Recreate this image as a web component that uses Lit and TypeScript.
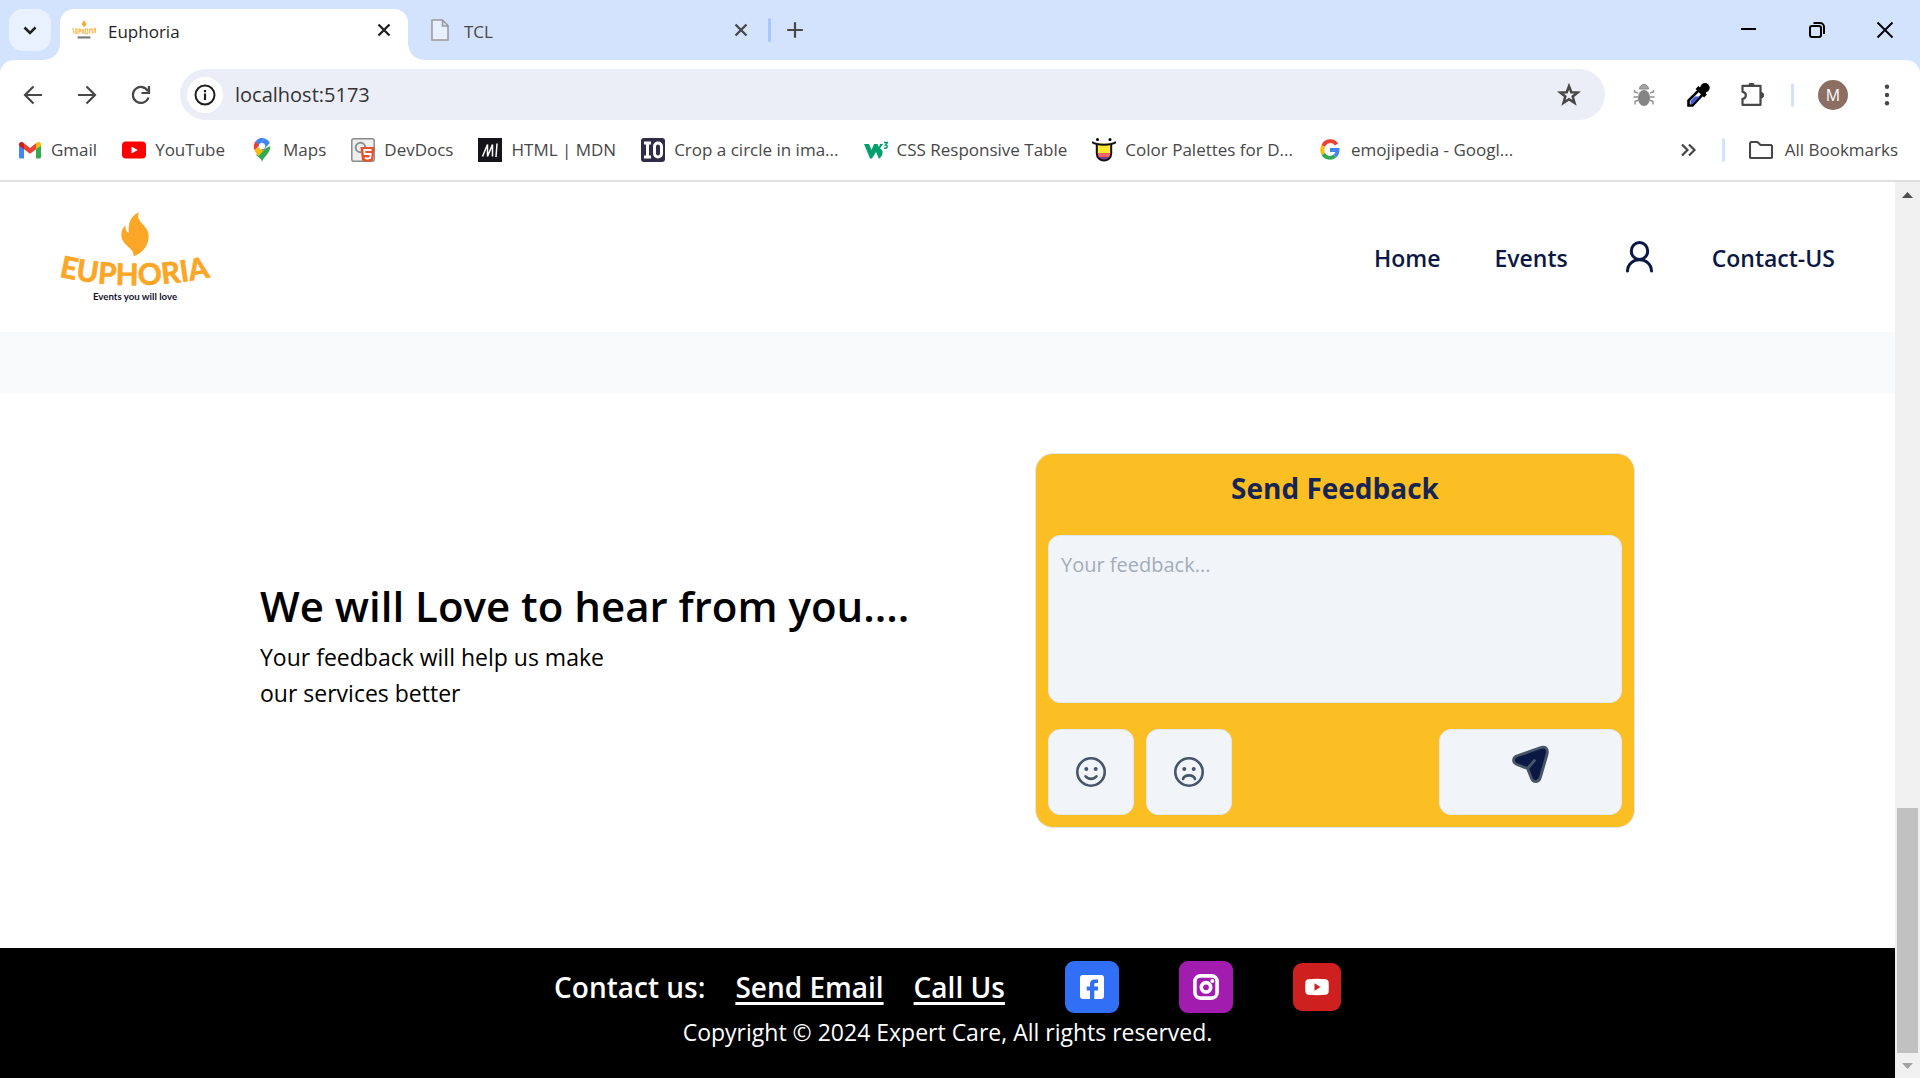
import { LitElement, html, css, svg } from "lit";
import { customElement } from "lit/decorators.js";

const closeIcon = svg`<path d="M6.500 6.500L17.500 17.500M17.500 6.500L6.500 17.500" fill="none" stroke="currentColor" stroke-width="2.300"/>`;

const flame = svg`<path fill="#fba626" d="M417 96C390 108 385 128 386 158C378 154 375 147 377 135C367 143 363 154 364 168C367 196 401 200 401 228C430 218 447 193 446 165C445 133 403 123 417 96Z"/>`;

const pics: Record<string, unknown> = {
  gmail: svg`<path fill="#4285f4" d="M1 6.500v12.500a1.500 1.500 0 0 0 1.500 1.500H6V10z"/><path fill="#34a853" d="M18 20.500h3.500A1.500 1.500 0 0 0 23 19V6.500L18 10z"/><path fill="#c5221f" d="M1 6.500C1 4 3.500 3.500 5 4.500l1 .8v6L1 7.800z"/><path fill="#fbbc04" d="M23 6.500c0-2.500-2.500-3-4-2l-1 .8v6l5-3.500z"/><path fill="#ea4335" d="M6 5.300l6 4.600 6-4.600v6l-6 4.500-6-4.500z"/>`,
  youtube: svg`<rect y="3.500" width="24" height="17" rx="4" fill="#f00"/><path fill="#fff" d="M9.500 8.500v7l6.300-3.500z"/>`,
  maps: svg`<path fill="#34a853" d="M12 24c1-5 8.500-8.500 8.300-16L12 12 6 17c3.500 3 5.500 4 6 7z"/><path fill="#fbbc04" d="M4.500 12c.8 2.500 2.500 4.300 3.800 6.300L16 10l-5-2z"/><path fill="#ea4335" d="M5.600 3.200C3.600 5.600 3.400 9 4.600 12.300L11 6z"/><path fill="#4285f4" d="M5.600 3.200A8.300 8.300 0 0 1 14.800.5L9 7.200z"/><path fill="#4285f4" d="M14.500.4a8 8 0 0 1 5.300 4.700L12.500 13l-3-6z"/><circle cx="12" cy="8.200" r="3.100" fill="#fff"/>`,
  devdocs: svg`<rect x=".8" y=".8" width="22.400" height="22.400" rx="2" fill="#eee" stroke="#8a8a8a" stroke-width="1.500"/><circle cx="9.500" cy="9.500" r="4.800" fill="none" stroke="#8d9192" stroke-width="2"/><path fill="#e5532d" d="M9.500 9h14L22 22.500l-5.500 1.500-5.500-1.500z"/><path d="M20.500 12h-7.300l.4 4h6.100l-.4 3.800-2.800.9-2.700-.9" fill="none" stroke="#fff" stroke-width="1.800"/>`,
  mdn: svg`<rect width="24" height="24" fill="#15141a"/><path d="M4.500 18.500L9.500 6.500V18.500L14.500 6.500V18.500M19 5.500L18 19" fill="none" stroke="#fff" stroke-width="1.500" stroke-linejoin="bevel"/>`,
  io: svg`<rect width="24" height="24" rx="3" fill="#302c48"/><path d="M3 5h7M3 19h7M6.500 5v14" stroke="#fff" stroke-width="3" fill="none"/><rect x="13.500" y="5" width="7" height="14" rx="3.500" fill="none" stroke="#fff" stroke-width="3"/>`,
  w3: svg`<path fill="#04a06b" d="M0 6h5l2.500 6L10 6h3.500l1.500 3 1-3h3l-3 4.500c3 1.500 3 4 2 7L15 21l-3-7-4 6.500H6z"/><path d="M20 4.500h3.500L21.500 7c2.500 0 2.500 4-1.500 3" fill="none" stroke="#04a06b" stroke-width="1.500"/>`,
  palette: svg`<path d="M4.500 5.500v10c0 9.500 15 9.500 15 0v-10z" fill="#ffe92e"/><path d="M5 15h14v4l-3 3H8l-3-3z" fill="#ff6464"/><path d="M6.500 19h11c-1 5-10 5-11 0z" fill="#7b3d9a"/><path d="M0 4c4 3.500 20 3.500 24 0M4.800 6v9.500c0 9.300 14.400 9.300 14.400 0V6" fill="none" stroke="#111" stroke-width="2"/><circle cx="5.500" cy="1.500" r="1.500"/><circle cx="18" cy="1.500" r="1.500"/>`,
  google: svg`<g fill="none" stroke-width="3.800"><path stroke="#ea4335" d="M18.500 6.500A7.500 7.500 0 0 0 5.300 8"/><path stroke="#fbbc05" d="M5.300 8a8 8 0 0 0 0 8"/><path stroke="#34a853" d="M5.300 16a7.500 7.500 0 0 0 11.500 2"/><path stroke="#4285f4" d="M12 12h7.600c0 2.500-1 4.500-2.800 6"/></g>`,
};

const bookmarks = [
  ["gmail", "Gmail"],
  ["youtube", "YouTube"],
  ["maps", "Maps"],
  ["devdocs", "DevDocs"],
  ["mdn", "HTML | MDN"],
  ["io", "Crop a circle in ima..."],
  ["w3", "CSS Responsive Table"],
  ["palette", "Color Palettes for D..."],
  ["google", "emojipedia - Googl..."],
];

const icon = (content: unknown, size = 24) =>
  html`<svg width=${size} height=${size} viewBox="0 0 24 24" aria-hidden="true">${content}</svg>`;

@customElement("browser-chrome")
class BrowserChrome extends LitElement {
  static styles = css`
    :host {
      display: block;
      background: #d3e3fd;
      color: #474747;
      font-size: 17px;
    }
    * { box-sizing: border-box; }
    button, input { font: inherit; color: inherit; border: 0; padding: 0; background: none; }
    button { display: grid; place-items: center; }
    svg { display: block; flex: none; }
    .strip { display: flex; align-items: center; height: 60px; padding: 0 1px 0 9px; }
    .search { width: 42px; height: 42px; border-radius: 14px; background: #e9f1fe; color: #1f1f1f; }
    .tab { display: flex; align-items: center; gap: 12px; width: 348px; height: 51px; padding: 0 12px 9px; }
    .tab.active {
      position: relative;
      align-self: flex-end;
      margin-left: 9px;
      background: #fff;
      color: #1f1f1f;
      border-radius: 14px 14px 0 0;
    }
    .tab.active::before, .tab.active::after {
      content: "";
      position: absolute;
      bottom: 0;
      width: 15px;
      height: 15px;
    }
    .tab.active::before { right: 100%; background: radial-gradient(circle at 0 0, transparent 14px, #fff 15px); }
    .tab.active::after { left: 100%; background: radial-gradient(circle at 100% 0, transparent 14px, #fff 15px); }
    .tab.idle { width: 360px; height: 42px; padding: 0 15px 0 20px; }
    .tab span { flex: 1; padding-top: 3px; line-height: 24px; }
    .bar { width: 3px; height: 24px; border-radius: 2px; background: #a8c7fa; }
    .bar.pale { background: #d3e3fd; }
    .add { width: 48px; height: 42px; }
    .window { display: flex; margin-left: auto; color: #000; }
    .window button { width: 68px; height: 60px; }
    .panel { background: #fff; border-radius: 14px 14px 0 0; border-bottom: 2px solid #e0e0e0; }
    .toolbar { display: flex; align-items: center; padding: 9px 6px 0; }
    .tool { width: 54px; height: 51px; }
    .omnibox {
      display: flex;
      align-items: center;
      flex: 1;
      gap: 12px;
      height: 51px;
      margin: 0 12px;
      padding: 0 24px 0 7px;
      border-radius: 26px;
      background: #ebeef7;
    }
    .info { width: 36px; height: 36px; border-radius: 50%; background: #fff; color: #1f1f1f; }
    .omnibox input { flex: 1; min-width: 0; font-size: 20px; outline: 0; color: #333; }
    .toolbar .bar { margin: 0 12px; }
    .avatar { display: grid; place-items: center; width: 30px; height: 30px; border-radius: 50%; background: #8d6e63; color: #fff; font-size: 16px; line-height: 30px; }
    .marks { display: flex; align-items: center; gap: 25px; height: 60px; padding: 0 22px 0 18px; }
    a { display: flex; align-items: center; gap: 9px; color: inherit; text-decoration: none; white-space: nowrap; line-height: 24px; }
    .rest { display: flex; align-items: center; gap: 24px; margin-left: auto; }
    .rest a { gap: 12px; }
  `;

  render() {
    return html`
      <div class="strip">
        <button class="search" aria-label="Search tabs">${icon(svg`<path d="M6.500 9.500L12 15l5.500-5.500" fill="none" stroke="currentColor" stroke-width="2.600"/>`)}</button>
        <div class="tab active">
          <svg width="24" height="24" viewBox="180 90 450 280" aria-hidden="true">
            <g transform="translate(0 -50)">${flame}</g>
            <path d="M190 190l30 110M250 195v100h25V200M310 205v100M310 215h35v40h-35M370 210v95M400 210v95M430 210h45v90h-45zM510 205v95M510 210h30v30M560 200v95M590 295l10-95h20l5 85" fill="none" stroke="#fba626" stroke-width="16"/>
            <path d="M285 370h240" stroke="#777" stroke-width="40"/>
          </svg>
          <span>Euphoria</span>
          <button aria-label="Close Euphoria">${icon(closeIcon)}</button>
        </div>
        <div class="tab idle">
          <svg width="24" height="24" viewBox="0 0 24 24" aria-hidden="true"><path d="M4 2h10.500l5.500 5.500V22H4zM14.500 2v6H20" fill="#e9f0fd" stroke="#999" stroke-width="1.500"/></svg>
          <span>TCL</span>
          <button aria-label="Close TCL">${icon(closeIcon)}</button>
        </div>
        <div class="bar"></div>
        <button class="add" aria-label="New tab">${icon(svg`<path d="M12 4.200v15.600M4.200 12h15.600" stroke="currentColor" stroke-width="2.200"/>`)}</button>
        <div class="window">
          <button aria-label="Minimize">${icon(svg`<path d="M4 11h15" stroke="currentColor" stroke-width="2"/>`)}</button>
          <button aria-label="Restore">${icon(svg`<g fill="none" stroke="currentColor" stroke-width="2"><rect x="5" y="8" width="11" height="11" rx="2"/><path d="M8.500 5H15a4 4 0 0 1 4 4v7"/></g>`)}</button>
          <button aria-label="Close window">${icon(svg`<path d="M4.500 4.500l15 15M19.500 4.500l-15 15" stroke="currentColor" stroke-width="1.900"/>`)}</button>
        </div>
      </div>
      <div class="panel">
        <div class="toolbar">
          <button class="tool" aria-label="Back">${icon(svg`<path d="M21 12H4.500M12.500 3.500L4 12l8.500 8.500" fill="none" stroke="currentColor" stroke-width="2.200"/>`)}</button>
          <button class="tool" aria-label="Forward">${icon(svg`<path d="M3 12h16.500M11.500 3.500L20 12l-8.500 8.500" fill="none" stroke="currentColor" stroke-width="2.200"/>`)}</button>
          <button class="tool" aria-label="Reload">${icon(svg`<path d="M19.500 14.500A8 8 0 1 1 19 8.200M20 3v7h-7.500" fill="none" stroke="currentColor" stroke-width="2.200"/>`)}</button>
          <div class="omnibox">
            <button class="info" aria-label="View site information">${icon(svg`<circle cx="12" cy="12" r="9.500" fill="none" stroke="currentColor" stroke-width="2"/><path d="M12 10.500v6.500M12 7v2.200" stroke="currentColor" stroke-width="2.200"/>`)}</button>
            <input type="text" aria-label="Address" value="localhost:5173" />
            <button aria-label="Bookmark this page">${icon(svg`<path d="M12 3.200l2.300 6 6.400.3-5 4 1.800 6.300L12 16.200l-5.500 3.600 1.800-6.300-5-4 6.400-.3z" fill="none" stroke="currentColor" stroke-width="2.500"/>`)}</button>
          </div>
          <button class="tool" aria-label="Debugger">${icon(svg`<g stroke="#8f8f8f" stroke-width="1.400" fill="none"><path d="M6 10L2.500 9V7M6 14H1.500M6.500 17L3 18.500v3M18 10l3.500-1V7M18 14h4.500M17.500 17l3.500 1.500v3"/></g><path d="M7.500 6a4.500 4.500 0 0 1 9 0z" fill="#a5a5a5" stroke="#888"/><ellipse cx="12" cy="15" rx="6" ry="8" fill="#858585"/>`)}</button>
          <button class="tool" aria-label="Color picker">${icon(svg`<path d="M2.500 22.500h4L18.500 9.500l-4-4L2.500 17.500z" fill="#fff" stroke="#000" stroke-width="2.600"/><path d="M4.500 18l4.500-4.500h5l-7.500 7.500h-2z" fill="#3f5bd0"/><path d="M11 4.500l8.500 8.500M14.500 8.500l4-4" stroke="#000" stroke-width="4"/><circle cx="19" cy="4.800" r="4.700"/>`)}</button>
          <button class="tool" aria-label="Extensions">${icon(svg`<path d="M2.500 2.800h18v19h-18v-6c4.500-.5 4.500-6.500 0-7z" fill="none" stroke="currentColor" stroke-width="2.200" stroke-linejoin="round"/><path d="M8.800 2.500a2.700 2.700 0 0 1 5.400 0zM21 9.500a2.700 2.700 0 0 1 0 5.400z" fill="currentColor" stroke="currentColor"/>`)}</button>
          <div class="bar pale"></div>
          <button class="tool" aria-label="Profile"><span class="avatar">M</span></button>
          <button class="tool" aria-label="Menu">${icon(svg`<g fill="currentColor"><circle cx="12" cy="3.700" r="2.200"/><circle cx="12" cy="12" r="2.200"/><circle cx="12" cy="20.300" r="2.200"/></g>`)}</button>
        </div>
        <nav class="marks" aria-label="Bookmarks">
          ${bookmarks.map(([key, name]) => html`<a href="#">${icon(pics[key])}<span>${name}</span></a>`)}
          <div class="rest">
            <button aria-label="More bookmarks">${icon(svg`<path d="M8 6.500l5.500 5.500L8 17.500M15 6.500l5.500 5.500-5.500 5.500" fill="none" stroke="currentColor" stroke-width="2.200"/>`)}</button>
            <div class="bar pale"></div>
            <a href="#">${icon(svg`<path d="M1 19.500V5.500l1-1.500h6.500l3 3H22l1 1v11.500l-1 .500H2z" fill="none" stroke="currentColor" stroke-width="2.100"/>`)}<span>All Bookmarks</span></a>
          </div>
        </nav>
      </div>
    `;
  }
}

@customElement("page-header")
class PageHeader extends LitElement {
  static styles = css`
    :host { display: flex; align-items: center; justify-content: space-between; height: 150px; padding: 0 60px; background: #fff; }
    svg { display: block; overflow: visible; }
    .word { font: 700 89px Lato, sans-serif; fill: #fba626; stroke: #fba626; stroke-width: 2px; }
    .tag { font: 700 29px Lato, sans-serif; fill: #14122e; }
    nav { display: flex; align-items: center; gap: 54px; padding-top: 1px; }
    nav a { color: #0c1844; font-size: 23px; font-weight: 600; line-height: 36px; text-decoration: none; }
  `;

  render() {
    return html`
      <a href="#" aria-label="Euphoria home">
        <svg width="150" height="92" viewBox="180 92 450 276">
          <defs><path id="arc" d="M176 288Q405 342 650 286" /></defs>
          ${flame}
          <text class="word"><textPath href="#arc">EUPHORIA</textPath></text>
          <text class="tag" x="405" y="360" text-anchor="middle">Events you will love</text>
        </svg>
      </a>
      <nav>
        <a href="#">Home</a>
        <a href="#">Events</a>
        <a href="#" aria-label="Account">
          <svg width="36" height="36" viewBox="0 0 36 36"><g fill="none" stroke="#0c1844" stroke-width="3" stroke-linecap="round"><ellipse cx="17.500" cy="11" rx="8.200" ry="8.500"/><path d="M5.500 31c.5-15 23.500-15 24 0"/></g></svg>
        </a>
        <a href="#">Contact-US</a>
      </nav>
    `;
  }
}

@customElement("feedback-section")
class FeedbackSection extends LitElement {
  static styles = css`
    :host { display: block; flex: 1; background: #fff; padding: 60px; }
    * { box-sizing: border-box; }
    .inner { display: flex; align-items: center; justify-content: space-between; max-width: 1375px; margin: 0 auto; }
    .intro { padding-top: 8px; color: #000; }
    h1 { margin: 0; padding-bottom: 6px; font-size: 42px; font-weight: 600; line-height: 54px; }
    .intro p { margin: 0; font-size: 23px; line-height: 36px; }
    .card {
      display: grid;
      grid-template-columns: 86px 86px 1fr 183px;
      column-gap: 12px;
      width: 600px;
      padding: 12px;
      border: 1px solid #e2e8f0;
      border-radius: 18px;
      background: #fbbf24;
    }
    h2 { grid-column: 1 / -1; margin: 0 0 24px; padding: 4px 0 5px; color: #172554; font-size: 28px; font-weight: 700; line-height: 36px; text-align: center; }
    textarea {
      grid-column: 1 / -1;
      display: block;
      width: 100%;
      height: 168px;
      margin-bottom: 26px;
      padding: 11px 12px;
      border: 1px solid #e2e8f0;
      border-radius: 12px;
      background: #f1f5f9;
      font: inherit;
      font-size: 20px;
      line-height: 36px;
      resize: none;
      outline: 0;
    }
    textarea::placeholder { color: #a3acb9; opacity: 1; }
    button { display: grid; place-items: center; height: 86px; padding: 0; border: 1px solid #e2e8f0; border-radius: 12px; background: #f1f5f9; }
    .send { grid-column: 4; padding-bottom: 14px; }
    svg { display: block; }
  `;

  face(label: string, mouth: string) {
    return html`<button type="button" aria-label=${label}>
      <svg width="36" height="36" viewBox="0 0 36 36">
        <g fill="none" stroke="#475569" stroke-width="2.600" stroke-linecap="round"><circle cx="18" cy="18" r="13.700"/><path d=${mouth}/></g>
        <g fill="#475569"><circle cx="13.300" cy="15" r="2"/><circle cx="22.700" cy="15" r="2"/></g>
      </svg>
    </button>`;
  }

  render() {
    return html`
      <div class="inner">
        <div class="intro">
          <h1>We will Love to hear from you....</h1>
          <p>Your feedback will help us make<br />our services better</p>
        </div>
        <form class="card">
          <h2>Send Feedback</h2>
          <textarea aria-label="Your feedback" placeholder="Your feedback..."></textarea>
          ${this.face("Happy", "M12.500 22.300c2.500 3.400 8.500 3.400 11 0")}
          ${this.face("Unhappy", "M12 25c1.500-4.800 10.500-4.800 12 0")}
          <button class="send" type="button" aria-label="Send">
            <svg width="40" height="40" viewBox="0 0 40 40"><path d="M7 10.500L29 2.800C34.500 1 37.500 3.500 36 9.500L29.500 32C28 37.500 22.500 38 20.500 33.500L16.500 23.500L6 19.500C1 17.500 1.500 12 7 10.500ZM16.500 23.500L23.500 15.500" fill="#0c1844" stroke="#475569" stroke-width="2.800" stroke-linecap="round" stroke-linejoin="round"/></svg>
          </button>
        </form>
      </div>
    `;
  }
}

@customElement("page-footer")
class PageFooter extends LitElement {
  static styles = css`
    :host { display: block; padding: 12px 0 27px; background: #000; color: #fff; text-align: center; }
    .row { display: flex; align-items: center; justify-content: center; }
    .row span, .link { font-size: 28px; font-weight: 600; line-height: 54px; }
    .link { margin-left: 30px; color: #fff; text-decoration-thickness: 3px; text-underline-offset: 4px; text-decoration-skip-ink: none; }
    .social { display: grid; place-items: center; width: 54px; height: 52px; margin-left: 60px; border-radius: 9px; }
    .facebook { background: #316ff6; }
    .instagram { background: #a21caf; }
    .youtube { width: 48px; height: 48px; background: #cf2020; }
    p { margin: 0; font-size: 23px; line-height: 37px; }
    svg { display: block; }
  `;

  render() {
    return html`
      <div class="row">
        <span>Contact us:</span>
        <a class="link" href="#">Send Email</a>
        <a class="link" href="#">Call Us</a>
        <a class="social facebook" href="#" aria-label="Facebook">
          <svg width="24" height="24" viewBox="0 0 24 24"><rect width="24" height="24" rx="3" fill="#fff"/><path d="M10 24v-8.500H6.700v-4H10V9c0-3.200 2-4.600 4.500-4.600H18v3.700h-2.200c-1.100 0-1.500.6-1.500 1.500v1.900H18v4h-3.700V24z" fill="#316ff6"/></svg>
        </a>
        <a class="social instagram" href="#" aria-label="Instagram">
          <svg width="26" height="26" viewBox="0 0 26 26"><g fill="none" stroke="#fff"><rect x="1.900" y="1.900" width="22.200" height="22.200" rx="5.500" stroke-width="3.600"/><circle cx="13" cy="13.300" r="4.700" stroke-width="3.600"/></g><circle cx="19.300" cy="6.900" r="2" fill="#fff"/></svg>
        </a>
        <a class="social youtube" href="#" aria-label="YouTube">
          <svg width="24" height="18" viewBox="0 0 24 18"><path d="M3 1.200q9-.8 18 0 2 .3 2.500 2.300.6 5.500 0 11-.5 2-2.500 2.300-9 .8-18 0-2-.3-2.500-2.300-.6-5.500 0-11Q1 1.500 3 1.200z" fill="#fff"/><path d="M9.500 5.200v7.600l6-3.800z" fill="#cf2020"/></svg>
        </a>
      </div>
      <p>Copyright © 2024 Expert Care, All rights reserved.</p>
    `;
  }
}

@customElement("app-root")
class AppRoot extends LitElement {
  static styles = css`
    :host {
      display: flex;
      flex-direction: column;
      min-height: 100vh;
      font-family: "Open Sans", "Noto Sans", sans-serif;
    }
    .view { flex: 1; display: grid; grid-template-columns: 1fr 25px; }
    .page { display: flex; flex-direction: column; }
    .band { height: 61px; background: #f9fafc; }
    .scroll { display: flex; flex-direction: column; background: #f0f0f0; }
    .scroll button { display: grid; place-items: center; height: 25px; padding: 0; border: 0; background: none; }
    .track { flex: 1; display: flex; flex-direction: column; justify-content: flex-end; padding: 0 2px; }
    .thumb { height: 29%; background: #c1c1c1; }
  `;

  render() {
    return html`
      <browser-chrome></browser-chrome>
      <div class="view">
        <main class="page">
          <page-header></page-header>
          <div class="band"></div>
          <feedback-section></feedback-section>
          <page-footer></page-footer>
        </main>
        <div class="scroll">
          <button aria-label="Scroll up"><svg width="11" height="6"><path d="M0 6L5.500 0L11 6z" fill="#505050"/></svg></button>
          <div class="track"><div class="thumb"></div></div>
          <button aria-label="Scroll down"><svg width="11" height="6"><path d="M0 0L5.500 6L11 0z" fill="#a3a3a3"/></svg></button>
        </div>
      </div>
    `;
  }
}
